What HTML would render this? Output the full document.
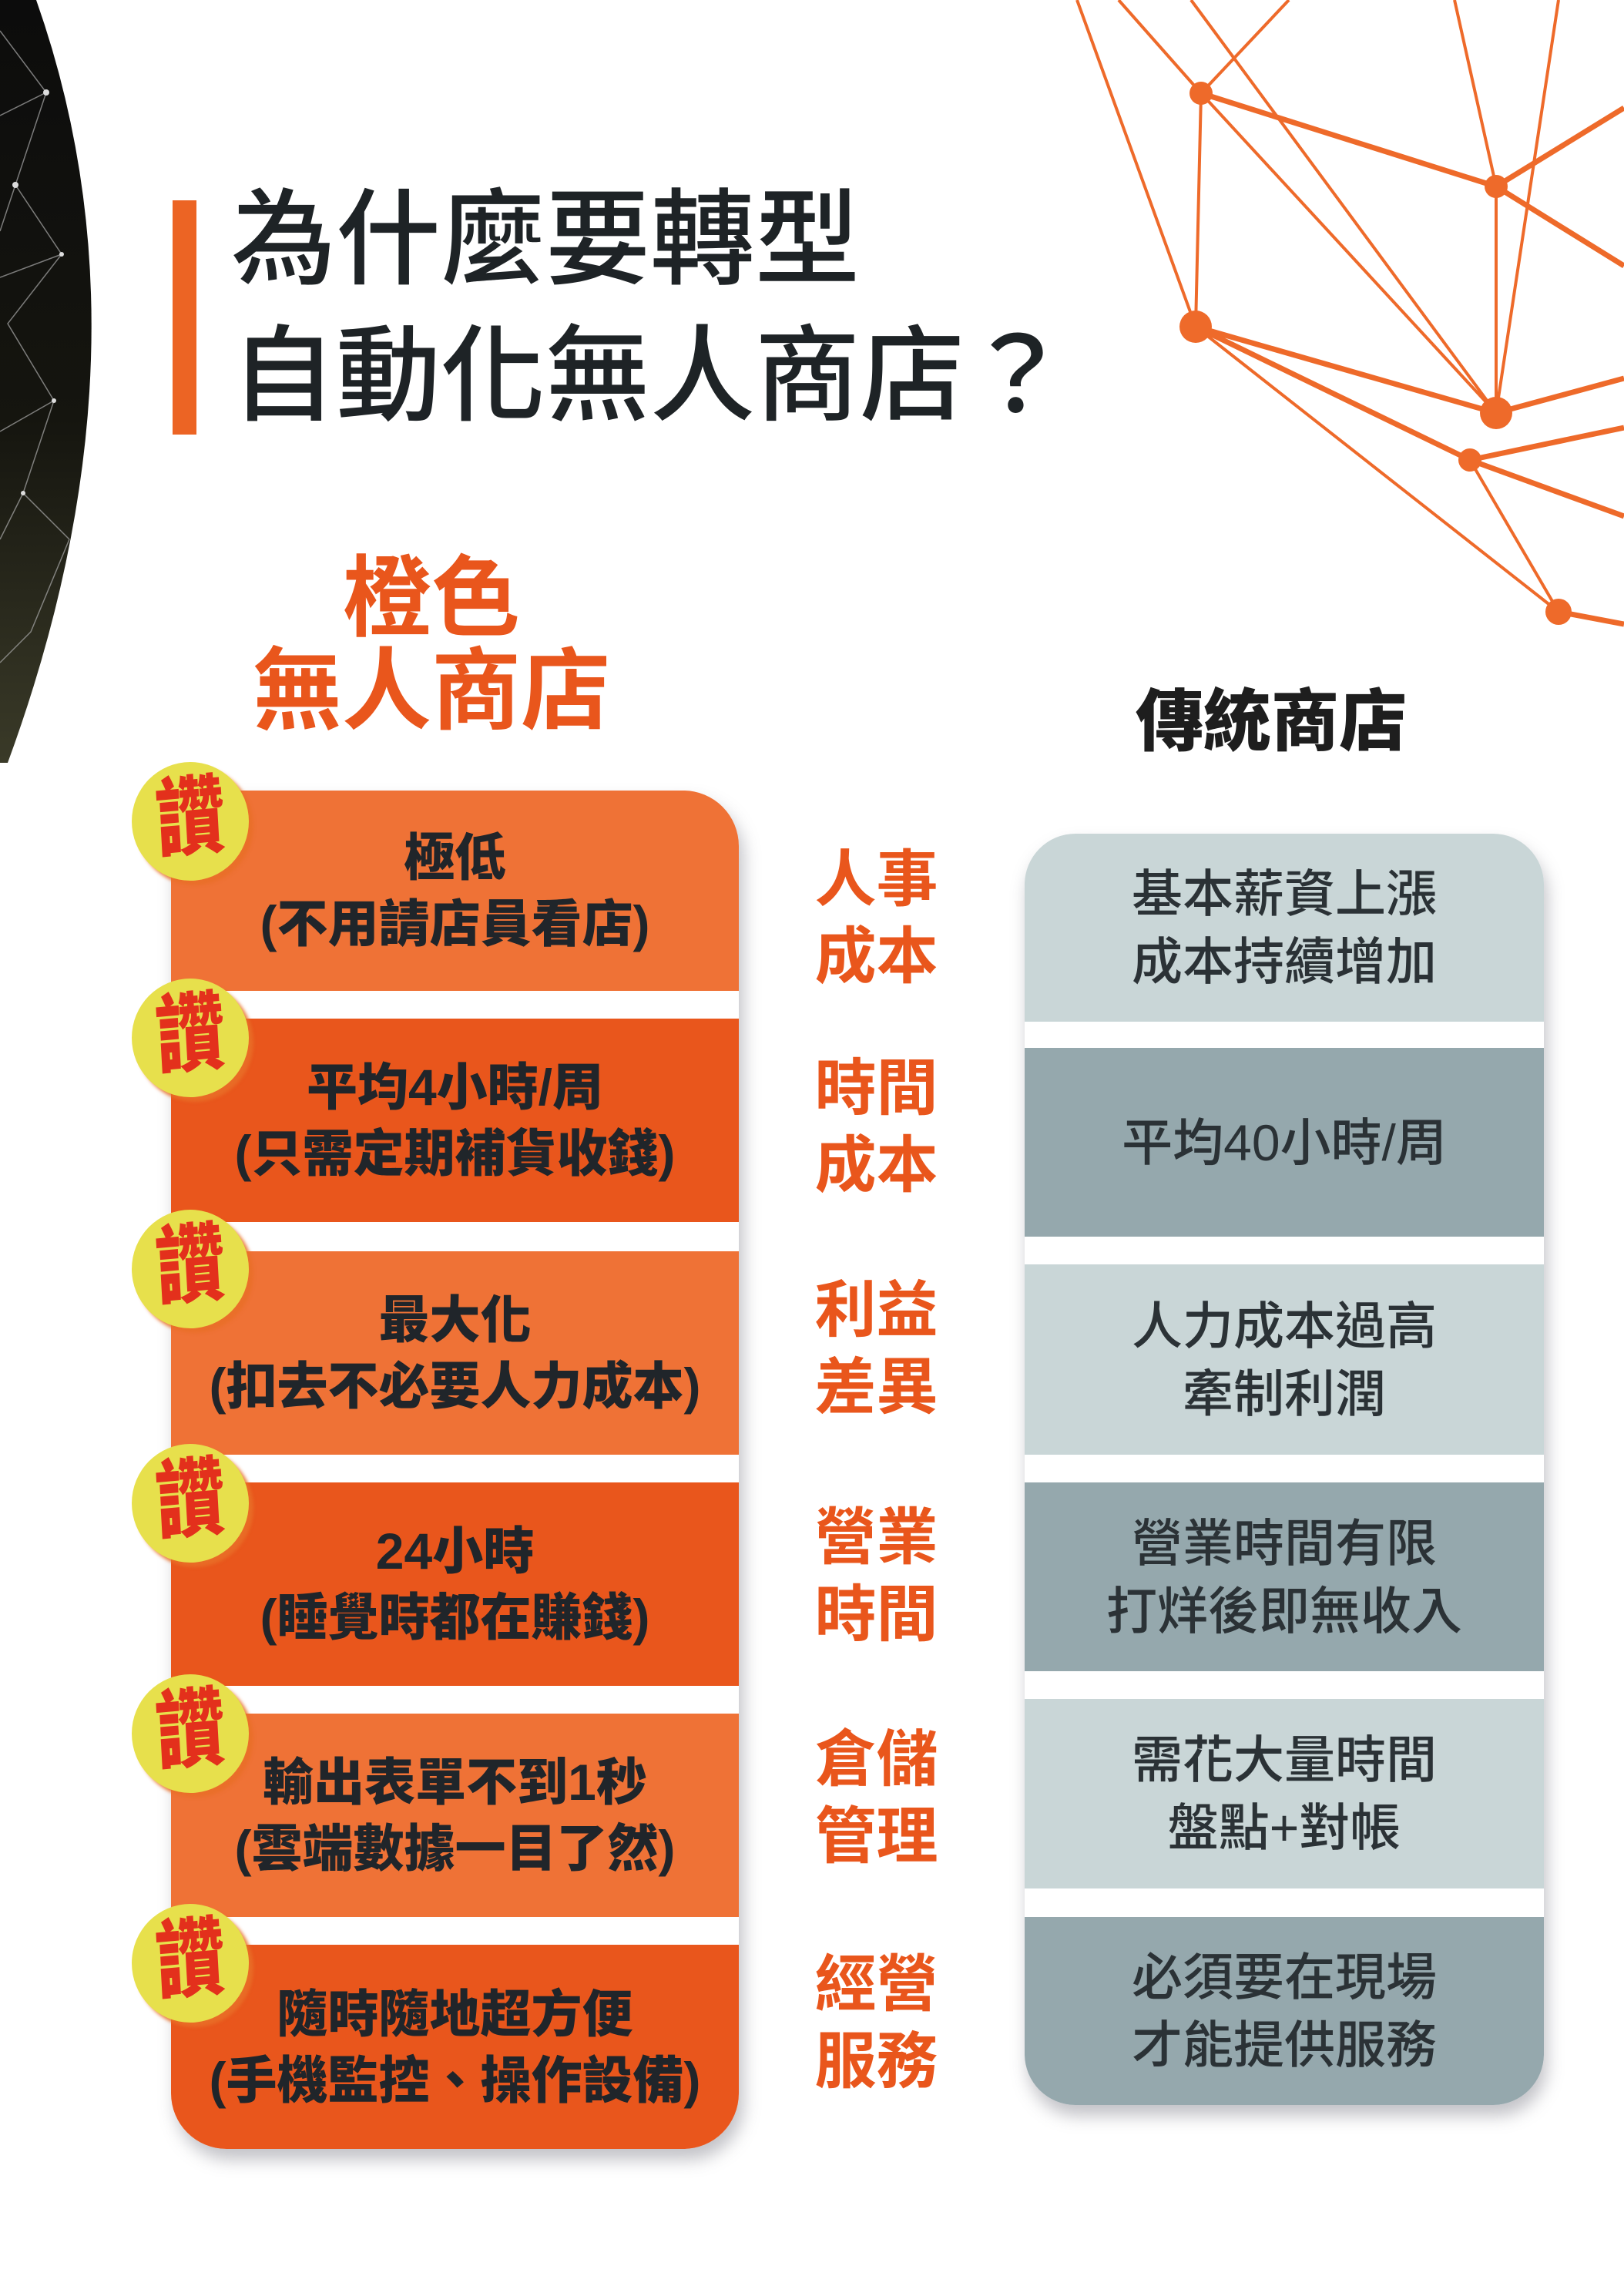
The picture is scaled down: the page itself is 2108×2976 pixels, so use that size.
<!DOCTYPE html>
<html><head><meta charset="utf-8"><style>
*{margin:0;padding:0;box-sizing:border-box}
body{width:2108px;height:2976px;background:#fff;position:relative;overflow:hidden;font-family:"Liberation Sans","Noto Sans CJK TC",sans-serif}
.abs{position:absolute}
.t1{left:300px;font-size:136px;line-height:136px;font-weight:500;color:#1e2326;white-space:nowrap}
.og{color:#e9561c;font-weight:700;white-space:nowrap;text-align:center}
.lcol{left:222px;top:1026px;width:737px;height:1763px;border-radius:72px;overflow:hidden;box-shadow:6px 14px 22px rgba(120,120,130,.45)}
.rcol{left:1330px;top:1082px;width:674px;height:1650px;border-radius:66px;overflow:hidden;box-shadow:4px 14px 22px rgba(120,120,130,.45)}
.row{position:absolute;left:0;width:100%;display:flex;align-items:center;justify-content:center;text-align:center}
.lt{font-size:66px;line-height:86px;font-weight:900;color:#20252a}
.rt{font-size:66px;line-height:88px;font-weight:500;color:#2b3236}
.L1{background:#ef7236}.L2{background:#e9561c}
.R1{background:#c9d6d7}.R2{background:#95a8ad}
.gap{background:#fff}
.badge{position:absolute;width:152px;height:154px;border-radius:50%;background:#e7e04c;box-shadow:6px 6px 4px rgba(233,110,40,.85);display:flex;align-items:center;justify-content:center}
.badge span{font-size:112px;font-weight:900;color:#e3301c;transform:scaleX(.8) rotate(-4deg);line-height:1;margin-top:-8px}
.mid{left:1040px;width:195px;text-align:center;font-size:80px;line-height:100px;font-weight:700;color:#e9561c}
</style></head><body>
<svg class="abs" style="left:0;top:0" width="2108" height="1000">
<defs><linearGradient id="g" x1="0" y1="0" x2="0" y2="1"><stop offset="0" stop-color="#0c0c0c"/><stop offset=".55" stop-color="#15150f"/><stop offset="1" stop-color="#3a3a28"/></linearGradient></defs>
<path d="M0,0 L47,0 Q207,453 10,990 L0,990 Z" fill="url(#g)"/>
<g stroke="#aaa" stroke-width="1.5" fill="none" opacity=".7">
<path d="M0,40 L60,120 L20,240 L80,330 L10,420 L70,520 L30,640 L90,700"/>
<path d="M0,150 L60,120 M20,240 L0,300 M80,330 L0,360 M70,520 L0,560 M30,640 L0,700 M90,700 L40,820 L0,860"/>
</g>
<g fill="#ddd"><circle cx="60" cy="120" r="4"/><circle cx="20" cy="240" r="4"/><circle cx="80" cy="330" r="3"/><circle cx="70" cy="520" r="3"/><circle cx="30" cy="640" r="3"/></g>
<g stroke="#ee6a2a" stroke-width="4" fill="none">
<path d="M1398,0 L1552,424 M1452,0 L1559,121 M1546,0 L1942,536 M1673,0 L1559,121 M1888,0 L1942,242 M2023,0 L1942,536 M1942,242 L1942,536 M1908,597 L2023,794 M1552,424 L2023,794 M1559,121 L1552,424 M1559,121 L1942,536"/>
<path d="M1559,121 L1942,242 M1942,242 L2108,140 M1942,242 L2108,345 M1552,424 L1942,536 M1552,424 L1908,597 M1942,536 L2108,491 M1908,597 L2108,555 M1908,597 L2108,670 M2023,794 L2108,810" stroke-width="7"/>
</g>
<g fill="#ee6a2a"><circle cx="1559" cy="121" r="15"/><circle cx="1942" cy="242" r="15"/><circle cx="1552" cy="424" r="21"/><circle cx="1942" cy="536" r="21"/><circle cx="1908" cy="597" r="15"/><circle cx="2023" cy="794" r="17"/></g>
</svg>
<div class="abs" style="left:224px;top:260px;width:31px;height:304px;background:#ec6424"></div>
<div class="abs t1" style="top:243px">為什麼要轉型</div>
<div class="abs t1" style="top:420px">自動化無人商店？</div>
<div class="abs og" style="left:360px;width:400px;top:712px;font-size:115px;line-height:130px">橙色</div>
<div class="abs og" style="left:280px;width:560px;top:832px;font-size:116px;line-height:130px">無人商店</div>
<div class="abs" style="left:1440px;width:420px;text-align:center;top:887px;font-size:88px;line-height:100px;font-weight:900;color:#1e1e1e">傳統商店</div>

<div class="abs lcol">
<div class="row L1" style="top:0;height:260px"><div class="lt">極低<br>(不用請店員看店)</div></div>
<div class="row gap" style="top:260px;height:36px"></div>
<div class="row L2" style="top:296px;height:264px"><div class="lt">平均4小時/周<br>(只需定期補貨收錢)</div></div>
<div class="row gap" style="top:560px;height:38px"></div>
<div class="row L1" style="top:598px;height:264px"><div class="lt">最大化<br>(扣去不必要人力成本)</div></div>
<div class="row gap" style="top:862px;height:36px"></div>
<div class="row L2" style="top:898px;height:264px"><div class="lt">24小時<br>(睡覺時都在賺錢)</div></div>
<div class="row gap" style="top:1162px;height:36px"></div>
<div class="row L1" style="top:1198px;height:264px"><div class="lt">輸出表單不到1秒<br>(雲端數據一目了然)</div></div>
<div class="row gap" style="top:1462px;height:36px"></div>
<div class="row L2" style="top:1498px;height:265px"><div class="lt">隨時隨地超方便<br>(手機監控、操作設備)</div></div>
</div>
<div class="badge" style="left:171px;top:989px"><span>讚</span></div>
<div class="badge" style="left:171px;top:1270px"><span>讚</span></div>
<div class="badge" style="left:171px;top:1570px"><span>讚</span></div>
<div class="badge" style="left:171px;top:1874px"><span>讚</span></div>
<div class="badge" style="left:171px;top:2173px"><span>讚</span></div>
<div class="badge" style="left:171px;top:2471px"><span>讚</span></div>

<div class="abs mid" style="top:1092px">人事<br>成本</div>
<div class="abs mid" style="top:1363px">時間<br>成本</div>
<div class="abs mid" style="top:1651px">利益<br>差異</div>
<div class="abs mid" style="top:1946px">營業<br>時間</div>
<div class="abs mid" style="top:2234px">倉儲<br>管理</div>
<div class="abs mid" style="top:2526px">經營<br>服務</div>

<div class="abs rcol">
<div class="row R1" style="top:0;height:244px"><div class="rt">基本薪資上漲<br>成本持續增加</div></div>
<div class="row gap" style="top:244px;height:34px"></div>
<div class="row R2" style="top:278px;height:245px"><div class="rt">平均40小時/周</div></div>
<div class="row gap" style="top:523px;height:36px"></div>
<div class="row R1" style="top:559px;height:247px"><div class="rt">人力成本過高<br>牽制利潤</div></div>
<div class="row gap" style="top:806px;height:36px"></div>
<div class="row R2" style="top:842px;height:245px"><div class="rt">營業時間有限<br>打烊後即無收入</div></div>
<div class="row gap" style="top:1087px;height:36px"></div>
<div class="row R1" style="top:1123px;height:246px"><div class="rt">需花大量時間<br>盤點+對帳</div></div>
<div class="row gap" style="top:1369px;height:37px"></div>
<div class="row R2" style="top:1406px;height:244px"><div class="rt">必須要在現場<br>才能提供服務</div></div>
</div>
</body></html>
